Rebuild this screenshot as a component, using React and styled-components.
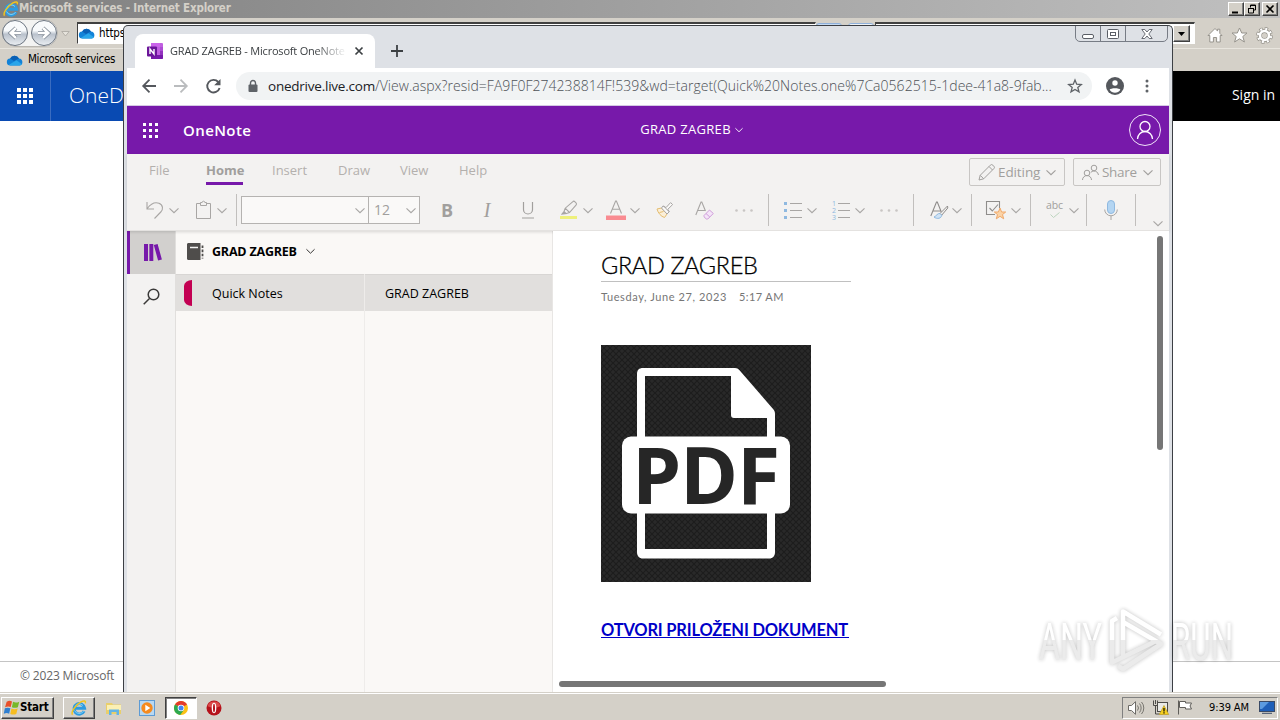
import React from 'react';
import styled, { createGlobalStyle } from 'styled-components';


const
    SEGOE = `"Open Sans", "Noto Sans", sans-serif`,
    TAHOMA = `"DejaVu Sans Condensed", "DejaVu Sans", sans-serif`,
    CALIBRI = `Lato, sans-serif`,
    PURPLE = '#7719aa';


const GlobalStyle = createGlobalStyle`
    * {
        box-sizing: border-box;
    }

    body {
        margin: 0;
        overflow: hidden;
        background: #fff;
    }
`;


const Desktop = styled.div`
    position: relative;
    display: flex;
    flex-direction: column;
    width: 1280px;
    height: 720px;
    overflow: hidden;
    font-family: ${SEGOE};
`;


const Label = styled.span`
    font-family: ${ ({ $font }) => $font || SEGOE };
    font-size: ${ ({ $size }) => $size || 13 }px;
    font-weight: ${ ({ $weight }) => $weight || 400 };
    letter-spacing: ${ ({ $spacing }) => $spacing || 0 }px;
    margin-left: ${ ({ $left }) => $left || 0 }px;
    margin-bottom: ${ ({ $lift }) => $lift || 0 }px;
    color: ${ ({ $color }) => $color || '#000' };
    line-height: 1.2;
    white-space: nowrap;
`;


const Icon = styled.svg`
    display: block;
    flex: none;
    width: ${ ({ $w }) => $w }px;
    height: ${ ({ $h, $w }) => $h || $w }px;
    margin-left: ${ ({ $left }) => $left || 0 }px;
    margin-top: ${ ({ $top }) => $top || 0 }px;
    fill: none;
    overflow: visible;
`;


/* Internet Explorer */

const Browser = styled.section`
    display: flex;
    flex-direction: column;
    height: 692px;
    background: #fff;
`;

const TitleBar = styled.header`
    display: flex;
    align-items: center;
    flex: none;
    height: 18px;
    padding: 0 2px 0 3px;
    background: linear-gradient(90deg, #808080, #c0c0c0);
`;

const TitleButtons = styled.div`
    display: flex;
    margin-left: auto;
`;

const TitleButton = styled.div`
    display: flex;
    align-items: center;
    justify-content: center;
    width: 16px;
    height: 14px;
    margin-left: ${ ({ $gap }) => $gap || 0 }px;
    background: #d4d0c8;
    border: 1px solid;
    border-color: #fff #404040 #404040 #fff;
    box-shadow: inset -1px -1px 0 #808080;
`;

const AddressRow = styled.div`
    display: flex;
    align-items: flex-start;
    flex: none;
    height: 30px;
    background: #d4d0c8;
`;

const NavPill = styled.div`
    display: flex;
    align-items: center;
    gap: 3px;
    width: 56px;
    height: 28px;
    margin: 1px 0 0 2px;
    padding-left: 0;
    border-radius: 14px;
    background: #f3f3f2;
    box-shadow: inset 0 0 0 1px #b9b6b0;
`;

const NavCircle = styled.div`
    display: flex;
    align-items: center;
    justify-content: center;
    width: 26px;
    height: 26px;
    border: 1px solid #6b7480;
    border-radius: 50%;
    background: linear-gradient(#f8fafc 40%, #b9c1cc 55%, #e9edf1);
`;

const AddressField = styled.div`
    display: flex;
    align-items: center;
    width: ${ ({ $w }) => $w }px;
    height: 22px;
    margin: 4px 0 0 ${ ({ $left }) => $left }px;
    padding-left: 1px;
    background: #fff;
    border: 1px solid;
    border-top: 2px solid #404040;
    border-color: #404040 #fff #fff #404040;
`;

const DropButton = styled(TitleButton)`
    width: 17px;
    height: 17px;
    margin: 0 4px 0 auto;
`;

const FieldButton = styled.div`
    width: 26px;
    height: 18px;
    margin: 5px 0 0 ${ ({ $left }) => $left || 0 }px;
    background: ${ ({ $fill }) => $fill };
    border: 1px solid #8fb0da;
    border-radius: 3px;
`;

const BookmarkRow = styled.div`
    display: flex;
    align-items: center;
    flex: none;
    height: 23px;
    padding-left: 7px;
    background: #d4d0c8;
    border-top: 1px solid #e8e5de;
`;

const DriveHeader = styled.div`
    display: flex;
    align-items: center;
    flex: none;
    height: 50px;
    background: linear-gradient(90deg, #094ab2 600px, #000 600px);
`;

const DriveLauncher = styled.div`
    display: flex;
    align-items: center;
    justify-content: center;
    width: 51px;
    height: 50px;
    border-right: 1px solid #3a6cc0;
`;

const PageFooter = styled.footer`
    display: flex;
    align-items: center;
    height: 31px;
    margin-top: auto;
    padding: 0 0 2px 20px;
    border-top: 1px solid #c4c4c4;
`;


/* Chrome */

const ChromeWindow = styled.section`
    position: absolute;
    left: 123px;
    top: 25px;
    display: flex;
    flex-direction: column;
    width: 1050px;
    height: 667px;
    border: 1px solid #3c3f44;
    border-bottom: 0;
    border-radius: 5px 5px 0 0;
    background: #dee1e6;
    overflow: hidden;
`;

const TabStrip = styled.div`
    display: flex;
    align-items: flex-start;
    height: 42px;
    padding-left: 11px;
`;

const Tab = styled.div`
    display: flex;
    align-items: center;
    width: 240px;
    height: 34px;
    margin-top: 8px;
    padding-left: 12px;
    border-radius: 8px 8px 0 0;
    background: #fff;
`;

const TabTitle = styled(Label)`
    width: 178px;
    margin-left: 7px;
    overflow: hidden;
    mask-image: linear-gradient(90deg, #000 145px, transparent 177px);
`;

const CaptionButtons = styled.div`
    display: flex;
    width: 93px;
    height: 17px;
    margin: -1px 4px 0 auto;
    border: 1px solid #777c85;
    border-radius: 0 0 5px 5px;
`;

const CaptionButton = styled.div`
    display: flex;
    align-items: center;
    justify-content: center;
    width: ${ ({ $w }) => $w }px;

    & + & {
        border-left: 1px solid #777c85;
    }
`;

const Viewport = styled.div`
    display: flex;
    flex-direction: column;
    flex: 1;
    min-height: 0;
    margin: 0 3px;
    background: #fff;
`;

const Toolbar = styled.div`
    display: flex;
    align-items: center;
    flex: none;
    height: 38px;
    padding-bottom: 1px;
    border-bottom: 1px solid #d5c9e4;
`;

const Omnibox = styled.div`
    display: flex;
    align-items: center;
    width: 856px;
    height: 28px;
    margin-left: 15px;
    padding-left: 12px;
    border-radius: 14px;
    background: #f1f3f4;
`;

const Url = styled.div`
    display: flex;
    width: 790px;
    margin-left: 10px;
`;


/* OneNote */

const NoteHeader = styled.header`
    display: flex;
    align-items: center;
    flex: none;
    height: 48px;
    padding-left: 16px;
    background: ${PURPLE};
`;

const Avatar = styled.div`
    display: flex;
    align-items: center;
    justify-content: center;
    width: 32px;
    height: 32px;
    margin: 0 8px 0 auto;
    border: 1px solid #f0e2f8;
    border-radius: 50%;
`;

const Ribbon = styled.div`
    position: relative;
    flex: none;
    height: 77px;
    background: #f3f2f1;
    border-bottom: 1px solid #e4e2e0;
    box-shadow: 0 1px 3px rgba(0, 0, 0, 0.14);
`;

const RibbonTabs = styled.nav`
    display: flex;
    align-items: flex-start;
    height: 36px;
`;

const RibbonTab = styled.div`
    height: 31px;
    width: ${ ({ $w }) => $w }px;
    margin-left: ${ ({ $left }) => $left }px;
    padding-top: 4px;
    border-bottom: 3px solid ${ ({ $active }) => $active ? PURPLE : 'transparent' };
`;

const RibbonButton = styled.div`
    display: flex;
    align-items: center;
    width: ${ ({ $w }) => $w }px;
    height: 28px;
    margin: 4px 0 0 ${ ({ $left }) => $left }px;
    padding-left: 8px;
    border: 1px solid #c8c6c4;
    border-radius: 2px;
`;

const Tools = styled.div`
    display: flex;
    align-items: center;
    height: 40px;
`;

const Divider = styled.i`
    width: 1px;
    height: 32px;
    margin-left: ${ ({ $left }) => $left }px;
    background: #c1bfbd;
`;

const SelectBox = styled.div`
    display: flex;
    align-items: center;
    justify-content: space-between;
    width: ${ ({ $w }) => $w }px;
    height: 28px;
    margin-left: ${ ({ $left }) => $left || 0 }px;
    padding: 0 3px 0 5px;
    background: #faf9f8;
    border: 1px solid #b5b3b1;

    & + & {
        border-left: 0;
    }
`;

const Glyph = styled.span`
    width: 20px;
    margin-left: ${ ({ $left }) => $left }px;
    color: #a19f9d;
    font-family: ${ ({ $font }) => $font || SEGOE };
    font-size: ${ ({ $size }) => $size || 18 }px;
    font-style: ${ ({ $italic }) => $italic ? 'italic' : 'normal' };
    font-weight: ${ ({ $bold }) => $bold ? 700 : 400 };
    text-align: center;
    line-height: 20px;
`;

const Workspace = styled.div`
    display: flex;
    flex: 1;
    min-height: 0;
`;

const Rail = styled.aside`
    width: 49px;
    background: #f3f2f1;
    border-right: 1px solid #e1dfdd;
`;

const RailItem = styled.div`
    display: flex;
    align-items: center;
    height: 43px;
    padding-left: 13px;
    border-left: 3px solid ${ ({ $active }) => $active ? PURPLE : 'transparent' };
    background: ${ ({ $active }) => $active ? '#d2d0ce' : 'transparent' };
`;

const Notebook = styled.div`
    display: flex;
    flex-direction: column;
    width: 377px;
    background: #faf8f6;
    border-right: 1px solid #e8e6e4;
`;

const NotebookHeader = styled.div`
    display: flex;
    align-items: center;
    height: 43px;
    padding: 0 0 2px 11px;
`;

const Columns = styled.div`
    display: flex;
    flex: 1;
`;

const Column = styled.div`
    width: ${ ({ $w }) => $w }px;

    & + & {
        border-left: 1px solid #eeecea;
    }
`;

const ListRow = styled.div`
    display: flex;
    align-items: center;
    height: 37px;
    background: #e1dfdd;
    border-top: 1px solid #d8d6d4;
`;

const SectionTab = styled.i`
    width: 8px;
    height: 26px;
    margin-left: 8px;
    border-radius: 8px 0 0 8px / 6px 0 0 6px;
    background: #c30052;
`;

const Canvas = styled.main`
    position: relative;
    flex: 1;
    padding: 19px 0 0 48px;
    background: #fff;
`;

const PageTitle = styled.div`
    width: 250px;
    height: 32px;
    border-bottom: 1px solid #c0c0c0;
    font-family: ${CALIBRI};
    font-size: 23.5px;
    font-weight: 300;
    -webkit-text-stroke: 0.3px #000;
    letter-spacing: -0.35px;
    line-height: 31px;
    white-space: nowrap;
`;

const PageDate = styled.div`
    display: flex;
    gap: 12px;
    height: 30px;
    align-items: center;
`;

const Picture = styled.svg`
    display: block;
    width: 210px;
    height: 237px;
    margin-top: 33px;
`;

const DocLink = styled.a`
    display: block;
    width: 248px;
    height: 18px;
    margin-top: 38px;
    border-bottom: 1px solid #0000c8;
    color: #0000c8;
    font-family: ${CALIBRI};
    font-size: 16.5px;
    font-weight: 700;
    letter-spacing: -0.2px;
    line-height: 20px;
    white-space: nowrap;
`;

const ScrollThumb = styled.i`
    position: absolute;
    border-radius: 3px;
    background: #767676;
`;

const VerticalThumb = styled(ScrollThumb)`
    top: 5px;
    right: 6px;
    width: 6px;
    height: 214px;
`;

const HorizontalThumb = styled(ScrollThumb)`
    left: 6px;
    bottom: 5px;
    width: 327px;
    height: 6px;
`;


/* Taskbar */

const Taskbar = styled.footer`
    display: flex;
    align-items: center;
    height: 28px;
    padding: 3px 2px 0 1px;
    background: #d4d0c8;
    box-shadow: inset 0 1px 0 #d4d0c8, inset 0 2px 0 #fff;
`;

const TaskButton = styled.div`
    display: flex;
    align-items: center;
    justify-content: ${ ({ $start }) => $start ? 'flex-start' : 'center' };
    width: ${ ({ $w }) => $w || 32 }px;
    height: 22px;
    margin-left: ${ ({ $left }) => $left || 0 }px;
    padding-left: ${ ({ $start }) => $start ? 2 : 0 }px;
    background: ${ ({ $pressed }) => $pressed ? '#fff' : '#d4d0c8' };
    border: 1px solid;
    border-color: ${ ({ $pressed }) => $pressed ? '#404040 #fff #fff #404040' : '#fff #404040 #404040 #fff' };
    box-shadow: ${ ({ $pressed }) => $pressed ? 'inset 1px 1px 0 #808080' : 'inset -1px -1px 0 #808080' };
`;

const Tray = styled.div`
    display: flex;
    align-items: center;
    width: 156px;
    height: 22px;
    margin-left: auto;
    padding-left: 5px;
    border: 1px solid;
    border-color: #808080 #fff #fff #808080;
`;

const Watermark = styled.svg`
    position: absolute;
    left: 1030px;
    top: 600px;
    width: 212px;
    height: 80px;
    opacity: 0.9;
    filter: drop-shadow(0 0 2px rgba(0, 0, 0, 0.28));
`;


const Chevron = ({ left, top, size = 10, color = '#a8a6a4' }) =>
    <Icon $w={ size } $h={ size / 2 } $left={ left } $top={ top } viewBox="0 0 10 5">
        <path d="M0.5 0.3 5 4.7 9.5 0.3" stroke={ color } strokeWidth="1.1"/>
    </Icon>;


const Waffle = ({ size, dot, left }) => {
    const step = (size - dot) / 2;

    return <Icon $w={ size } $left={ left } viewBox={ `0 0 ${size} ${size}` }>
        { [0, 1, 2].map(row => [0, 1, 2].map(col =>
            <rect key={ `${row}${col}` } x={ col * step } y={ row * step } width={ dot } height={ dot } fill="#fff"/>
        )) }
    </Icon>
};


const Cloud = ({ left }) =>
    <Icon $w={ 16 } $h={ 11 } $left={ left } viewBox="0 0 16 11">
        <path d="M3.6 10.5a3.5 3.5 0 0 1-.5-7A5 5 0 0 1 12 3.4a3.6 3.6 0 0 1 .6 7.1z" fill="#1282d8"/>
        <path d="M3.1 3.5A5 5 0 0 1 12 3.4L7 6z" fill="#0a5fb4"/>
        <path d="M2 9.7 9.5 5.2l5.5 4a3.5 3.5 0 0 1-2.4 1.3h-9A3.5 3.5 0 0 1 2 9.7z" fill="#2aa6ea"/>
    </Icon>;


const IeLogo = ({ size = 16 }) =>
    <Icon $w={ size } viewBox="0 0 16 16">
        <path d="M13.1 11.2A5.3 5.3 0 1 1 13.6 8.2H4.6" stroke="#2d9be0" strokeWidth="3"/>
        <path d="M12.7 11A5.2 5.2 0 0 1 3.5 10.5M4 6.500a5 5 0 0 1 8-1" stroke="#7fd0f7" strokeWidth="1"/>
        <path d="M1.6 14.6C-.5 12.8 4.5 4.6 10 1.8c3.5-1.7 5-.8 4.3 1.6" stroke="#f2c41d" strokeWidth="1.5"/>
    </Icon>;


const ChromeLogo = () =>
    <Icon $w={ 14 } viewBox="0 0 14 14">
        <circle cx="7" cy="7" r="7" fill="#fbc116"/>
        <path d="M7 7 1 3.4A7 7 0 0 1 13 3.5z" fill="#e33b2e"/>
        <path d="M7 7 1 3.4A7 7 0 0 0 6.2 14L10 8.8z" fill="#2da94f"/>
        <circle cx="7" cy="7" r="3.3" fill="#fff"/>
        <circle cx="7" cy="7" r="2.5" fill="#4285f4"/>
    </Icon>;


const ExplorerWindow = () =>
    <Browser>
        <TitleBar>
            <IeLogo/>
            <Label $font={ TAHOMA } $size={ 11.5 } $weight={ 700 } $color="#d4d0c8" $spacing={ -0.17 }>
                Microsoft services - Internet Explorer
            </Label>
            <TitleButtons>
                <TitleButton>
                    <Icon $w={ 10 } $h={ 10 } viewBox="0 0 10 10"><path d="M1 8.5h6" stroke="#000" strokeWidth="2"/></Icon>
                </TitleButton>
                <TitleButton>
                    <Icon $w={ 10 } $h={ 10 } viewBox="0 0 10 10">
                        <path d="M3.5 3.5V1h5v5H7M3 1.5h6M1.5 4v5h5V4M1 4.5h6" stroke="#000"/>
                    </Icon>
                </TitleButton>
                <TitleButton $gap={ 2 }>
                    <Icon $w={ 8 } $h={ 8 } viewBox="0 0 8 8"><path d="m.5.5 7 7m0-7-7 7" stroke="#000" strokeWidth="1.6"/></Icon>
                </TitleButton>
            </TitleButtons>
        </TitleBar>

        <AddressRow>
            <NavPill>
                <NavCircle>
                    <Icon $w={ 16 } viewBox="0 0 16 16">
                        <path d="M14 8H4m5-5L3.6 8 9 13" stroke="#7f8994" strokeWidth="4"/>
                        <path d="M14 8H4m5-5L3.6 8 9 13" stroke="#fff" strokeWidth="2.4"/>
                    </Icon>
                </NavCircle>
                <NavCircle>
                    <Icon $w={ 16 } viewBox="0 0 16 16">
                        <path d="M2 8h10M7 3l5.4 5L7 13" stroke="#7f8994" strokeWidth="4"/>
                        <path d="M2 8h10M7 3l5.4 5L7 13" stroke="#fff" strokeWidth="2.4"/>
                    </Icon>
                </NavCircle>
            </NavPill>
            <Icon $w={ 9 } $h={ 6 } $left={ 3 } $top={ 13 } viewBox="0 0 9 6">
                <path d="M.8.5h7.4L4.5 5z" fill="#e6e3dc" stroke="#a9a69f" strokeWidth=".8"/>
            </Icon>
            <AddressField $w={ 739 } $left={ 7 }>
                <Cloud/>
                <Label $font={ TAHOMA } $size={ 11.5 } $left={ 4 } $spacing={ -0.1 }>https://onedrive.live.com</Label>
            </AddressField>
            <FieldButton $fill="#c5daf2"/>
            <FieldButton $fill="#eef2f6" $left={ 6 }/>
            <AddressField $w={ 320 } $left={ 1 }>
                <DropButton>
                    <Icon $w={ 7 } $h={ 4 } viewBox="0 0 7 4"><path d="M0 0h7L3.5 4z" fill="#000"/></Icon>
                </DropButton>
            </AddressField>
            <Icon $w={ 16 } $left={ 12 } $top={ 9 } viewBox="0 0 16 16">
                <path d="M1 8.5 8 1.5l2.6 2.6V2.2h2.2v4.1L15 8.5h-1.8V15H9.6v-4.5H6.4V15H2.8V8.5z" fill="#fff" stroke="#96938c"/>
            </Icon>
            <Icon $w={ 17 } $left={ 8 } $top={ 9 } viewBox="0 0 17 17">
                <path d="m8.5 1 2.2 5h5.3l-4.2 3.5 1.6 5.5-4.9-3.2L3.6 15l1.6-5.5L1 6h5.3z" fill="#fff" stroke="#96938c"/>
            </Icon>
            <Icon $w={ 17 } $left={ 8 } $top={ 9 } viewBox="0 0 17 17">
                <circle cx="8.5" cy="8.5" r="6.6" stroke="#96938c" strokeWidth="3.6" strokeDasharray="3.2 1.984"/>
                <circle cx="8.5" cy="8.5" r="4.6" stroke="#96938c" strokeWidth="4"/>
                <circle cx="8.5" cy="8.5" r="6.6" stroke="#fff" strokeWidth="2.2" strokeDasharray="2 3.184" strokeDashoffset="-.6"/>
                <circle cx="8.5" cy="8.5" r="4.5" stroke="#fff" strokeWidth="2.6"/>
            </Icon>
        </AddressRow>

        <BookmarkRow>
            <Cloud/>
            <Label $font={ TAHOMA } $size={ 11.5 } $left={ 5 } $spacing={ -0.32 } $lift={ 0 }>Microsoft services</Label>
        </BookmarkRow>

        <DriveHeader>
            <DriveLauncher><Waffle size={ 16 } dot={ 4 }/></DriveLauncher>
            <Label $size={ 21 } $weight={ 300 } $color="#fff" $left={ 18 }>OneDrive</Label>
            <Label $size={ 14 } $color="#fff" $left={ 1074 } $lift={ 2 }>Sign in</Label>
        </DriveHeader>

        <PageFooter>
            <Label $size={ 12 } $color="#666" $spacing={ -0.15 }>© 2023 Microsoft</Label>
        </PageFooter>
    </Browser>;


const ChromeTabs = () =>
    <TabStrip>
        <Tab>
            <Icon $w={ 16 } viewBox="0 0 16 16">
                <path d="M4 0h11a1 1 0 0 1 1 1v14a1 1 0 0 1-1 1H4z" fill="#c05fe0"/>
                <path d="M4 0h9v4H4z" fill="#ca64ea"/>
                <path d="M13 4h3v4h-3z" fill="#ae4bd5"/>
                <path d="M13 8h3v4h-3z" fill="#9332bf"/>
                <path d="M4 12h12v3a1 1 0 0 1-1 1H4z" fill="#7719aa"/>
                <rect y="3.5" width="10" height="10" rx="1" fill="#6b1599"/>
                <path d="M3 11V6l4 5V6" stroke="#fff" strokeWidth="1.4"/>
            </Icon>
            <TabTitle $size={ 11 } $color="#3c4043" $spacing={ -0.2 }>GRAD ZAGREB - Microsoft OneNote O</TabTitle>
            <Icon $w={ 8 } $left={ 7 } viewBox="0 0 8 8"><path d="m.5.5 7 7m0-7-7 7" stroke="#3c4043" strokeWidth="1.7"/></Icon>
        </Tab>
        <Icon $w={ 12 } $left={ 16 } $top={ 19 } viewBox="0 0 12 12"><path d="M6 0v12M0 6h12" stroke="#3c4043" strokeWidth="1.8"/></Icon>
        <CaptionButtons>
            <CaptionButton $w={ 24 }>
                <Icon $w={ 12 } $h={ 5 } $top={ 5 } viewBox="0 0 12 5"><rect x=".5" y=".5" width="11" height="4" rx="1.5" fill="#fff" stroke="#5a5e66"/></Icon>
            </CaptionButton>
            <CaptionButton $w={ 25 }>
                <Icon $w={ 12 } $h={ 10 } viewBox="0 0 12 10">
                    <rect x=".5" y=".5" width="11" height="9" rx="1" fill="#fff" stroke="#5a5e66"/>
                    <rect x="3.5" y="3.5" width="5" height="3" stroke="#5a5e66"/>
                </Icon>
            </CaptionButton>
            <CaptionButton $w={ 42 }>
                <Icon $w={ 12 } $h={ 10 } viewBox="0 0 12 10">
                    <path d="M.8.5h3L6 3 8.2.5h3L7.8 5l3.4 4.5h-3L6 7 3.800 9.5h-3L4.2 5z" fill="#fff" stroke="#5a5e66" strokeWidth=".9"/>
                </Icon>
            </CaptionButton>
        </CaptionButtons>
    </TabStrip>;


const ChromeToolbar = () =>
    <Toolbar>
        <Icon $w={ 14 } $left={ 15 } viewBox="0 0 14 14"><path d="M14 7H1.5M7.5.7 1.2 7l6.3 6.3" stroke="#55585d" strokeWidth="1.8"/></Icon>
        <Icon $w={ 14 } $left={ 18 } viewBox="0 0 14 14"><path d="M0 7h12.5M6.5.7 12.8 7l-6.3 6.3" stroke="#babcbe" strokeWidth="1.8"/></Icon>
        <Icon $w={ 15 } $left={ 18 } viewBox="0 0 15 15">
            <path d="M12.3 3A6.3 6.3 0 1 0 13.6 9" stroke="#55585d" strokeWidth="1.9"/>
            <path d="M14.5 0v6.3H8.2z" fill="#55585d"/>
        </Icon>
        <Omnibox>
            <Icon $w={ 10 } $h={ 12 } viewBox="0 0 10 12">
                <path d="M2.5 5V3a2.5 2.5 0 0 1 5 0v2" stroke="#5f6368" strokeWidth="1.4"/>
                <rect x=".5" y="4.5" width="9" height="7.5" rx="1" fill="#5f6368"/>
            </Icon>
            <Url>
                <Label $size={ 13.5 } $color="#202124" $spacing={ -0.23 }>onedrive.live.com</Label>
                <Label $size={ 14 } $weight={ 300 } $color="#4d5156" $spacing={ 0.03 }>
                    /View.aspx?resid=FA9F0F274238814F!539&wd=target(Quick%20Notes.one%7Ca0562515-1dee-41a8-9fab...
                </Label>
            </Url>
            <Icon $w={ 14 } $left={ 10 } viewBox="0 0 14 14">
                <path d="m7 1 1.7 4.2 4.6.3-3.5 2.9 1.2 4.5L7 10.4l-4 2.5 1.2-4.5L.7 5.5l4.6-.3z" stroke="#5f6368" strokeWidth="1.3"/>
            </Icon>
        </Omnibox>
        <Icon $w={ 18 } $left={ 14 } viewBox="0 0 18 18">
            <circle cx="9" cy="9" r="9" fill="#55585d"/>
            <circle cx="9" cy="6" r="2.7" fill="#fff"/>
            <path d="M3.6 12.8c1-2 9.8-2 10.8 0a6.5 6.5 0 0 1-10.8 0z" fill="#fff"/>
        </Icon>
        <Icon $w={ 4 } $h={ 14 } $left={ 21 } viewBox="0 0 4 14">
            { [2, 7, 12].map(y => <circle key={ y } cx="2" cy={ y } r="1.5" fill="#5f6368"/>) }
        </Icon>
    </Toolbar>;


const TABS = [
    { name: 'File', w: 20, left: 22 },
    { name: 'Home', w: 37, left: 37, active: true },
    { name: 'Insert', w: 36, left: 29 },
    { name: 'Draw', w: 33, left: 30 },
    { name: 'View', w: 30, left: 29 },
    { name: 'Help', w: 30, left: 29 }
];


const Dots = ({ left }) =>
    <Icon $w={ 18 } $h={ 3 } $left={ left } viewBox="0 0 18 3">
        { [1.5, 9, 16.5].map(x => <circle key={ x } cx={ x } cy="1.5" r="1.3" fill="#c8c6c4"/>) }
    </Icon>;


const NoteRibbon = () =>
    <Ribbon>
        <RibbonTabs>
            { TABS.map(({ name, w, left, active }) =>
                <RibbonTab key={ name } $w={ w } $left={ left } $active={ active }>
                    <Label $size={ 13 } $weight={ active ? 700 : 400 } $color={ active ? '#a19f9d' : '#b3b0ad' }>{ name }</Label>
                </RibbonTab>
            ) }
            <RibbonButton $w={ 96 } $left={ 480 }>
                <Icon $w={ 17 } viewBox="0 0 17 17">
                    <path d="m1 16 1.2-4.7L12.3 1.2a1.8 1.8 0 0 1 2.6 0l.9.9a1.8 1.8 0 0 1 0 2.6L5.7 14.8zM11 2.5 14.5 6M2.2 11.3l3.5 3.5" stroke="#a19f9d"/>
                </Icon>
                <Label $size={ 13.5 } $color="#a19f9d" $left={ 3 } $spacing={ -0.1 }>Editing</Label>
                <Chevron left={ 6 } color="#a19f9d"/>
            </RibbonButton>
            <RibbonButton $w={ 88 } $left={ 8 }>
                <Icon $w={ 17 } viewBox="0 0 17 17">
                    <circle cx="5" cy="9" r="2.8" stroke="#a19f9d"/>
                    <path d="M.5 16a4.5 4.5 0 0 1 9 0" stroke="#a19f9d"/>
                    <circle cx="12" cy="4" r="2.8" stroke="#a19f9d"/>
                    <path d="M8.8 8.3A4.5 4.5 0 0 1 16.5 11" stroke="#a19f9d"/>
                </Icon>
                <Label $size={ 13.5 } $color="#a19f9d" $left={ 3 } $spacing={ -0.3 }>Share</Label>
                <Chevron left={ 6 } color="#a19f9d"/>
            </RibbonButton>
        </RibbonTabs>

        <Tools>
            <Icon $w={ 18 } $left={ 19 } viewBox="0 0 18 18">
                <path d="M1 1v7h7M1.3 7.5C5 2.5 9 .8 13 2.3c4.3 1.8 4.3 6.3 1.8 8.7L8.5 17.5" stroke="#a8a6a4" strokeWidth="1.1"/>
            </Icon>
            <Chevron left={ 5 }/>
            <Icon $w={ 15 } $h={ 18 } $left={ 17 } viewBox="0 0 15 18">
                <path d="M4.5 2.5h-4v15h14v-15h-4M4.5 1.5h1.7a1.3 1.3 0 0 1 2.6 0h1.7v3h-6z" stroke="#a8a6a4"/>
            </Icon>
            <Chevron left={ 6 }/>
            <Divider $left={ 9 }/>
            <SelectBox $w={ 128 } $left={ 4 }><span/><Chevron/></SelectBox>
            <SelectBox $w={ 51 }><Label $size={ 14 } $color="#a19f9d">12</Label><Chevron/></SelectBox>
            <Glyph $left={ 17 } $bold>B</Glyph>
            <Glyph $left={ 20 } $italic $font={ `"Liberation Serif", serif` } $size={ 20 }>I</Glyph>
            <Icon $w={ 12 } $h={ 18 } $left={ 25 } viewBox="0 0 12 18">
                <path d="M1.5 1v7.5a4.5 4.5 0 0 0 9 0V1M0 17h12" stroke="#a19f9d" strokeWidth="1.2"/>
            </Icon>
            <Icon $w={ 18 } $h={ 20 } $left={ 26 } viewBox="0 0 18 20">
                <path d="m3.5 13 1.7-4.8L12.6 1.8a1.7 1.7 0 0 1 2.4 0l1 1a1.7 1.7 0 0 1 0 2.4L9.5 12.5 6.5 13.5zM5.2 8.2l4.3 4.3M4 11.5l2 2-4 .5z" stroke="#a8a6a4" strokeWidth="1.1"/>
                <path d="M0 16h17v3H0z" fill="#eef07c"/>
            </Icon>
            <Chevron left={ 5 }/>
            <Icon $w={ 20 } $h={ 20 } $left={ 13 } viewBox="0 0 20 20">
                <path d="M4.5 13.5 9.6 1h.8l5.1 12.5M6.3 9.2h7.4" stroke="#a8a6a4" strokeWidth="1.1"/>
                <path d="M0 15.500h20v4.500H0z" fill="#f98b91"/>
            </Icon>
            <Chevron left={ 4 }/>
            <Icon $w={ 18 } $left={ 16 } viewBox="0 0 18 18">
                <path d="M1 8 5.500 7l5.500 6-2.500 3.500C5 15.500 2 12 1 8zM3.500 11.500l4-1" fill="#fbefd8" stroke="#e4bd70"/>
                <path d="m5.500 7 1.500-2 3 1.600 4.600-5 2 2-4.800 4.700 1.500 2.400-2.300 2.300zM7.500 4.800l5.600 6" fill="#faf9f8" stroke="#a8a6a4"/>
            </Icon>
            <Icon $w={ 19 } $left={ 21 } viewBox="0 0 19 19">
                <path d="M.8 14 6 1h.8l3.700 9M2.600 9.500H10" stroke="#a8a6a4" strokeWidth="1.1"/>
                <path d="m9 14.5 5.5-5.5 3.8 3.5-5.5 5.5h-1.5L9 15.8zM11 12.5l3.8 3.5" fill="#f4e4f8" stroke="#cf9fda"/>
            </Icon>
            <Dots left={ 21 }/>
            <Divider $left={ 15 }/>
            <Icon $w={ 18 } $left={ 15 } viewBox="0 0 18 18">
                { [2, 9, 16].map(y => <g key={ y }>
                    <rect x="0" y={ y - 1 } width="3" height="3" fill="#8fb9e0"/>
                    <path d={ `M6 ${y + .5}h12` } stroke="#a8a6a4"/>
                </g>) }
            </Icon>
            <Chevron left={ 5 }/>
            <Icon $w={ 18 } $left={ 15 } viewBox="0 0 18 18">
                { [2, 9, 16].map((y, i) => <g key={ y }>
                    <text x="0" y={ y + 3 } fill="#8fb9e0" fontFamily="Open Sans, sans-serif" fontSize="7">{ i + 1 }</text>
                    <path d={ `M6 ${y + .5}h12` } stroke="#a8a6a4"/>
                </g>) }
            </Icon>
            <Chevron left={ 5 }/>
            <Dots left={ 15 }/>
            <Divider $left={ 15 }/>
            <Icon $w={ 18 } $left={ 16 } viewBox="0 0 18 18">
                <path d="M.8 15 6.5 1h.8l4 10M2.8 10h8" stroke="#8f8d8b" strokeWidth="1.1"/>
                <path d="m17.5 5-7.5 7.5 1.700 1.700L17.8 7z" fill="#f3f2f1" stroke="#8f8d8b"/>
                <path d="M10 12.5c-2.5-.5-3.500 2.500-6 3.500 3 2.500 7.500 1.500 7.700-1.800z" fill="#cfe3f5" stroke="#8fb9e0"/>
            </Icon>
            <Chevron left={ 4 }/>
            <Divider $left={ 9 }/>
            <Icon $w={ 20 } $h={ 19 } $left={ 14 } viewBox="0 0 20 19">
                <path d="M9 13.5H.5V.5h13V7M3.5 7l2.8 3L12 3.5" stroke="#8f8d8b" strokeWidth="1.1"/>
                <path d="m14 7 1.6 4h4.100l-3.200 2.600 1.200 4.200-3.700-2.500-3.700 2.500 1.200-4.200L8.300 11h4.100z" fill="#fbd3a6" stroke="#f0a868"/>
            </Icon>
            <Chevron left={ 5 }/>
            <Divider $left={ 9 }/>
            <Icon $w={ 18 } $h={ 20 } $left={ 15 } viewBox="0 0 18 20">
                <text x="0" y="9" fill="#a19f9d" fontFamily="Open Sans, sans-serif" fontSize="10.5" textLength="17">abc</text>
                <path d="m4.5 14.5 3 3 6-5" stroke="#bdd5bf"/>
            </Icon>
            <Chevron left={ 5 }/>
            <Divider $left={ 7 }/>
            <Icon $w={ 14 } $h={ 20 } $left={ 17 } viewBox="0 0 14 20">
                <rect x="3.5" y=".5" width="7" height="13" rx="3.5" fill="#b3d5f2" stroke="#8fb9e0"/>
                <path d="M.7 9.500a6.300 6.300 0 0 0 12.600 0M7 16v4" stroke="#a8a6a4"/>
            </Icon>
            <Divider $left={ 17 }/>
            <Chevron left={ 17 } top={ 26 }/>
        </Tools>
    </Ribbon>;


const PdfPicture = () =>
    <Picture viewBox="0 0 210 237">
        <defs>
            <pattern id="weave" width="6" height="6" patternUnits="userSpaceOnUse">
                <rect width="6" height="6" fill="#292929"/>
                <path d="M0 0l6 6M6 0 0 6" stroke="#1c1c1c" strokeWidth="1.2"/>
            </pattern>
        </defs>
        <rect width="210" height="237" fill="url(#weave)"/>
        <path
            d="M42 23h92c2 0 3 .7 4.500 2.200l34 39.300c1 1.500 1.500 2.500 1.500 4.500v138c0 4-2 6.500-6 6.500H42c-4 0-6-2.500-6-6.500V29c0-4 2-6 6-6zM44 31v173h122V73h-33c-2 0-3-1-3-3V31z"
            fill="#fff" fillRule="evenodd"
        />
        <rect x="21" y="91.5" width="168" height="77" rx="9" fill="#fff"/>
        <text x="31 79 136" y="159" fill="#262626" fontFamily="Open Sans, sans-serif" fontSize="78.5" fontWeight="700">PDF</text>
    </Picture>;


const NoteWorkspace = () =>
    <Workspace>
        <Rail>
            <RailItem $active>
                <Icon $w={ 19 } $h={ 17 } viewBox="0 0 19 17">
                    <path d="M1 0h4v17H1zM6.300 0h4v17h-4zM10.800 1l3.800-1 4.300 15.500-3.800 1z" fill="#7719aa"/>
                    <path d="M5.600 0v17" stroke="#d2d0ce" strokeWidth=".9"/>
                </Icon>
            </RailItem>
            <RailItem>
                <Icon $w={ 17 } $top={ 2 } viewBox="0 0 17 17">
                    <circle cx="10.5" cy="6.5" r="5.3" stroke="#3b3a39" strokeWidth="1.5"/>
                    <path d="M6.5 10.5.7 16.3" stroke="#3b3a39" strokeWidth="1.5"/>
                </Icon>
            </RailItem>
        </Rail>

        <Notebook>
            <NotebookHeader>
                <Icon $w={ 17 } viewBox="0 0 17 17">
                    <path d="M2 0h11.500v17H2a1.500 1.500 0 0 1-2-1.500v-14A1.500 1.500 0 0 1 2 0z" fill="#4f4d4b"/>
                    <path d="M3 4.500h8" stroke="#f3f2f1" strokeWidth="1.3"/>
                    <path d="M15.500 2.500v13" stroke="#4f4d4b" strokeWidth="1.8" strokeDasharray="2.6 1.5"/>
                </Icon>
                <Label $size={ 12.5 } $weight={ 700 } $left={ 8 } $spacing={ -0.2 }>GRAD ZAGREB</Label>
                <Chevron left={ 9 } size={ 9 } color="#323130"/>
            </NotebookHeader>
            <Columns>
                <Column $w={ 188 }>
                    <ListRow>
                        <SectionTab/>
                        <Label $size={ 12.5 } $left={ 20 }>Quick Notes</Label>
                    </ListRow>
                </Column>
                <Column $w={ 188 }>
                    <ListRow>
                        <Label $size={ 12.5 } $left={ 20 }>GRAD ZAGREB</Label>
                    </ListRow>
                </Column>
            </Columns>
        </Notebook>

        <Canvas>
            <PageTitle>GRAD ZAGREB</PageTitle>
            <PageDate>
                <Label $font={ CALIBRI } $size={ 11 } $color="#767676" $spacing={ 0.6 }>Tuesday, June 27, 2023</Label>
                <Label $font={ CALIBRI } $size={ 11 } $color="#767676" $spacing={ 0.4 }>5:17 AM</Label>
            </PageDate>
            <PdfPicture/>
            <DocLink>OTVORI PRILOŽENI DOKUMENT</DocLink>
            <VerticalThumb/>
            <HorizontalThumb/>
        </Canvas>
    </Workspace>;


const DesktopTaskbar = () =>
    <Taskbar>
        <TaskButton $w={ 53 } $start>
            <Icon $w={ 16 } $h={ 15 } viewBox="0 0 15 14">
                <path d="M2.5 1.5C4.500.3 6 .5 7.500 1.300L6.300 6.500C4.500 5.700 3 5.800 1 6.700z" fill="#e8502a"/>
                <path d="M8.500 1.700c2 .8 3.500.8 5.800-.2L13 6.700c-2 .8-3.800.8-5.600 0z" fill="#77b82a"/>
                <path d="M.8 7.800c2-.9 3.500-.9 5.200 0L4.800 12.800c-1.600-.9-3-.9-5 0z" fill="#2f7fd0"/>
                <path d="M7 8c2 .9 3.800.8 5.800 0l-1.300 5c-2 .9-3.600.8-5.600 0z" fill="#f6bd20"/>
            </Icon>
            <Label $font={ TAHOMA } $size={ 11.5 } $weight={ 700 } $spacing={ -0.2 }>Start</Label>
        </TaskButton>
        <TaskButton $left={ 9 }><IeLogo/></TaskButton>
        <Icon $w={ 16 } $left={ 11 } viewBox="0 0 16 16">
            <path d="M0 3h6l1 1.500h8V14H0z" fill="#e9cf6b"/>
            <path d="M1 5h14v5H1z" fill="#fbf0b4"/>
            <path d="M3 15V9.500h10V15h-2.500v-3h-5v3z" fill="#62b4e6"/>
        </Icon>
        <Icon $w={ 16 } $left={ 17 } viewBox="0 0 16 16">
            <rect x=".5" y=".5" width="15" height="15" fill="#b8d8f2" stroke="#5d9bd5"/>
            <circle cx="8" cy="8" r="5.7" fill="#f58a1f"/>
            <path d="m6.300 4.800 5 3.200-5 3.200z" fill="#fff"/>
        </Icon>
        <TaskButton $left={ 10 } $pressed><ChromeLogo/></TaskButton>
        <Icon $w={ 16 } $left={ 9 } viewBox="0 0 16 16">
            <circle cx="8" cy="8" r="7.5" fill="#b5121b"/>
            <path d="M1.500 6a7 7 0 0 1 13 0c-3 2-10 2-13 0z" fill="#dc4a4a"/>
            <ellipse cx="8" cy="8" rx="2.3" ry="5.2" fill="#fff"/>
            <ellipse cx="8" cy="8" rx="1" ry="4.3" fill="#b5121b"/>
        </Icon>
        <Tray>
            <Icon $w={ 17 } $h={ 14 } viewBox="0 0 17 14">
                <path d="M.5 4.500h3L7.500.7v12.600L3.500 9.500h-3z" fill="#fff" stroke="#6c6a66"/>
                <path d="M9.500 4.500a4 4 0 0 1 0 5M11.500 2.500a7 7 0 0 1 0 9M13.500 1a9 9 0 0 1 0 12" stroke="#77756f"/>
            </Icon>
            <Icon $w={ 16 } $h={ 15 } $left={ 8 } viewBox="0 0 16 15">
                <rect x="4.5" y="2.5" width="10" height="9" fill="#e9e9e6" stroke="#4c4b48"/>
                <path d="M.5.5v5h4v-5M2.500 5v9h4M2.500 0v4" stroke="#4c4b48"/>
                <path d="M11 5.500 15.700 14.500H6.300z" fill="#f6cf1e" stroke="#b08e10" strokeWidth=".6"/>
                <path d="M11 8v3.500M11 12.300v1.200" stroke="#000" strokeWidth="1.2"/>
            </Icon>
            <Icon $w={ 16 } $h={ 15 } $left={ 8 } viewBox="0 0 16 15">
                <path d="M1.500.5V14.500M2.500 1.500h6v1.500h6L13 6l1.500 3h-6V7.500h-6z" fill="#fff" stroke="#5f5d59"/>
            </Icon>
            <Label $font={ TAHOMA } $size={ 11 } $left={ 16 } $spacing={ -0.1 }>9:39 AM</Label>
            <Icon $w={ 16 } $h={ 13 } $left={ 10 } viewBox="0 0 16 13">
                <rect x=".5" y=".5" width="15" height="10" fill="#1f5fb8" stroke="#3a4a66"/>
                <path d="M1 1h9L3 8H1z" fill="#5c9be0"/>
                <path d="M3 12.300h10" stroke="#3a4a66"/>
            </Icon>
        </Tray>
    </Taskbar>;


const AnyRun = () =>
    <Watermark viewBox="0 0 212 80">
        <defs>
            <linearGradient id="fade" x1="0" y1="0" x2="0" y2="80" gradientUnits="userSpaceOnUse">
                <stop offset=".5" stopColor="#fff"/>
                <stop offset=".5" stopColor="#e9e9e9"/>
            </linearGradient>
        </defs>
        <g fill="url(#fade)" fontFamily="Roboto, sans-serif" fontSize="52">
            <text x="9" y="60" textLength="63" lengthAdjust="spacingAndGlyphs">ANY</text>
            <text x="141" y="60" textLength="62" lengthAdjust="spacingAndGlyphs">RUN</text>
        </g>
        <g fill="none" stroke="url(#fade)" strokeWidth="4.5" strokeLinejoin="round">
            <path d="M87 18 82 21v41.500l44-21.500"/>
            <path d="M93 57V11.500l38 23"/>
            <path d="M93 22l38 22-38 25-5-3"/>
        </g>
    </Watermark>;


export default function App() {

    return <Desktop>
        <GlobalStyle/>
        <ExplorerWindow/>
        <ChromeWindow>
            <ChromeTabs/>
            <Viewport>
                <ChromeToolbar/>
                <NoteHeader>
                    <Waffle size={ 15 } dot={ 3 }/>
                    <Label $size={ 15 } $weight={ 600 } $color="#fff" $left={ 25 } $spacing={ 0.4 }>OneNote</Label>
                    <Label $size={ 13 } $color="#fff" $left={ 389 } $spacing={ 0.3 }>GRAD ZAGREB</Label>
                    <Chevron left={ 4 } size={ 8 } color="#fff"/>
                    <Avatar>
                        <Icon $w={ 18 } $h={ 20 } viewBox="0 0 18 20">
                            <circle cx="9" cy="6.5" r="5" stroke="#fff" strokeWidth="1.3"/>
                            <path d="M1.500 19a7.500 7.500 0 0 1 15 0" stroke="#fff" strokeWidth="1.3"/>
                        </Icon>
                    </Avatar>
                </NoteHeader>
                <NoteRibbon/>
                <NoteWorkspace/>
            </Viewport>
        </ChromeWindow>
        <DesktopTaskbar/>
        <AnyRun/>
    </Desktop>

}
